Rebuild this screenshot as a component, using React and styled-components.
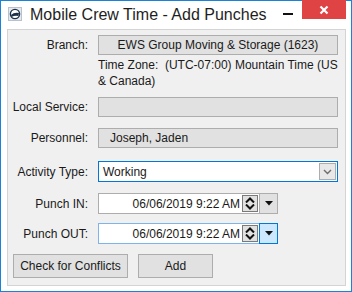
import React from 'react'
import styled, { createGlobalStyle } from 'styled-components'

const GlobalStyle = createGlobalStyle`
  html, body {
    margin: 0;
    padding: 0;
    background: #ffffff;
  }

  body {
    font-family: "Liberation Sans", Arial, sans-serif;
    font-size: 12px;
    color: #000;
  }
`

const Window = styled.div`
  width: 352px;
  height: 292px;
  box-sizing: border-box;
  border: 1px solid #1883d7;
  background: #ffffff;
  display: flex;
  flex-direction: column;
`

const TitleBar = styled.div`
  height: 28px;
  display: flex;
  flex-direction: row;
  align-items: flex-start;
`

const TitleIcon = styled.div`
  margin: 6px 0 0 7px;
  width: 14px;
  height: 14px;
  display: flex;
`

const TitleText = styled.div`
  margin: 4px 0 0 8px;
  font-size: 16px;
  line-height: 20px;
  color: #1e1e1e;
  flex-grow: 1;
`

const Minimize = styled.div`
  width: 10px;
  height: 2px;
  margin: 12px 9px 0 0;
  background: #111;
`

const Close = styled.div`
  width: 44px;
  height: 19px;
  margin: -1px 5px 0 0;
  background: #e04343;
  display: flex;
  align-items: center;
  justify-content: center;
`

const Panel = styled.div`
  flex-grow: 1;
  margin: 0 5px 5px 6px;
  border: 1px solid #d4d4d4;
  background: #f0f0f0;
  padding: 5px 7px 0 0;
  display: flex;
  flex-direction: column;
`

const Row = styled.div`
  display: grid;
  grid-template-columns: 80px 1fr;
  column-gap: 10px;
  align-items: center;
  margin-top: ${props => props.top || 0}px;
`

const Label = styled.div`
  text-align: right;
  color: #1a1a1a;
  align-self: ${props => props.alignTop ? 'start' : 'center'};
  padding-top: ${props => props.alignTop ? '4px' : '0'};
`

const ReadOnlyField = styled.div`
  height: 20px;
  box-sizing: border-box;
  border: 1px solid #adadad;
  background: #e1e1e1;
  line-height: 18px;
  text-align: ${props => props.center ? 'center' : 'left'};
  padding-left: ${props => props.center ? 0 : 11}px;
  color: #1a1a1a;
`

const TimeZone = styled.div`
  margin-top: 2px;
  line-height: 16px;
  color: #1a1a1a;
`

const Select = styled.div`
  height: 21px;
  box-sizing: border-box;
  border: 1px solid #0078d7;
  background: #ffffff;
  display: flex;
  flex-direction: row;
  align-items: center;
  padding: 0 1px 0 4px;
`

const SelectText = styled.div`
  flex-grow: 1;
  color: #1a1a1a;
`

const SelectButton = styled.div`
  width: 17px;
  height: 17px;
  box-sizing: border-box;
  border: 1px solid #adadad;
  background: #e8e8e8;
  display: flex;
  align-items: center;
  justify-content: center;
`

const DateBox = styled.div`
  width: 180px;
  height: 21px;
  box-sizing: border-box;
  border: 1px solid ${props => props.focused ? '#7eb4ea' : '#adadad'};
  background: #ffffff;
  display: flex;
  flex-direction: row;
  align-items: center;
`

const DateText = styled.div`
  flex-grow: 1;
  text-align: right;
  padding-right: 2px;
  color: #1a1a1a;
`

const Spinner = styled.div`
  width: 16px;
  height: 17px;
  box-sizing: border-box;
  border: 1px solid #7a7a7a;
  background: #e1e1e1;
  display: flex;
  flex-direction: column;
  align-items: center;
  justify-content: space-around;
`

const DropButton = styled.div`
  width: 19px;
  height: 21px;
  margin: -1px -1px -1px 1px;
  box-sizing: border-box;
  border: 1px solid ${props => props.hot ? '#0078d7' : '#adadad'};
  background: ${props => props.hot ? '#cce8ff' : '#e1e1e1'};
  display: flex;
  align-items: center;
  justify-content: center;
`

const ButtonRow = styled.div`
  display: flex;
  flex-direction: row;
  gap: 10px;
  margin: 10px 0 0 5px;
`

const Button = styled.div`
  width: ${props => props.width}px;
  height: 24px;
  box-sizing: border-box;
  border: 1px solid #adadad;
  background: #e1e1e1;
  display: flex;
  align-items: center;
  justify-content: center;
  color: #1a1a1a;
`

const Chevron = ({ color }) => (
  <svg width="9" height="6" viewBox="0 0 9 6">
    <path d="M1 1 L4.5 4.5 L8 1" fill="none" stroke={color} strokeWidth="1.4" />
  </svg>
)

const Caret = () => (
  <svg width="8" height="5" viewBox="0 0 8 5">
    <path d="M0 0 H8 L4 4.5 Z" fill="#111" />
  </svg>
)

const SpinArrows = () => (
  <>
    <svg width="10" height="6" viewBox="0 0 10 6">
      <path d="M1 5.5 L5 1.5 L9 5.5" fill="none" stroke="#111" strokeWidth="2" />
    </svg>
    <svg width="10" height="6" viewBox="0 0 10 6">
      <path d="M1 0.5 L5 4.5 L9 0.5" fill="none" stroke="#111" strokeWidth="2" />
    </svg>
  </>
)

const AppIcon = () => (
  <svg width="14" height="14" viewBox="0 0 14 14">
    <rect x="0.5" y="0.5" width="13" height="13" fill="#e3e9ef" stroke="#b7c2cc" />
    <circle cx="7" cy="7" r="4.6" fill="#fff" stroke="#1d3148" strokeWidth="1.4" />
    <path d="M3 8 Q6 5 11 6 L10.5 9 Q7 8 3.5 10 Z" fill="#1d3148" />
  </svg>
)

const DateField = ({ value, focused }) => (
  <DateBox focused={focused}>
    <DateText>{value}</DateText>
    <Spinner>
      <SpinArrows />
    </Spinner>
    <DropButton hot={focused}>
      <Caret />
    </DropButton>
  </DateBox>
)

const App = () => (
  <>
    <GlobalStyle />
    <Window>
      <TitleBar>
        <TitleIcon>
          <AppIcon />
        </TitleIcon>
        <TitleText>Mobile Crew Time - Add Punches</TitleText>
        <Minimize />
        <Close>
          <svg width="10" height="10" viewBox="0 0 10 10">
            <path d="M1.5 1.5 L8.5 8.5 M8.5 1.5 L1.5 8.5" stroke="#fff" strokeWidth="2.2" />
          </svg>
        </Close>
      </TitleBar>

      <Panel>
        <Row>
          <Label>Branch:</Label>
          <ReadOnlyField center>EWS Group Moving &amp; Storage (1623)</ReadOnlyField>
        </Row>
        <Row>
          <div />
          <TimeZone>Time Zone:{'\u00a0'} (UTC-07:00) Mountain Time (US &amp; Canada)</TimeZone>
        </Row>

        <Row top={8}>
          <Label>Local Service:</Label>
          <ReadOnlyField />
        </Row>

        <Row top={11}>
          <Label>Personnel:</Label>
          <ReadOnlyField>Joseph, Jaden</ReadOnlyField>
        </Row>

        <Row top={13}>
          <Label>Activity Type:</Label>
          <Select>
            <SelectText>Working</SelectText>
            <SelectButton>
              <Chevron color="#6d6d6d" />
            </SelectButton>
          </Select>
        </Row>

        <Row top={11}>
          <Label>Punch IN:</Label>
          <DateField value="06/06/2019 9:22 AM" />
        </Row>

        <Row top={9}>
          <Label>Punch OUT:</Label>
          <DateField value="06/06/2019 9:22 AM" focused />
        </Row>

        <ButtonRow>
          <Button width={115}>Check for Conflicts</Button>
          <Button width={75}>Add</Button>
        </ButtonRow>
      </Panel>
    </Window>
  </>
)

export default App
